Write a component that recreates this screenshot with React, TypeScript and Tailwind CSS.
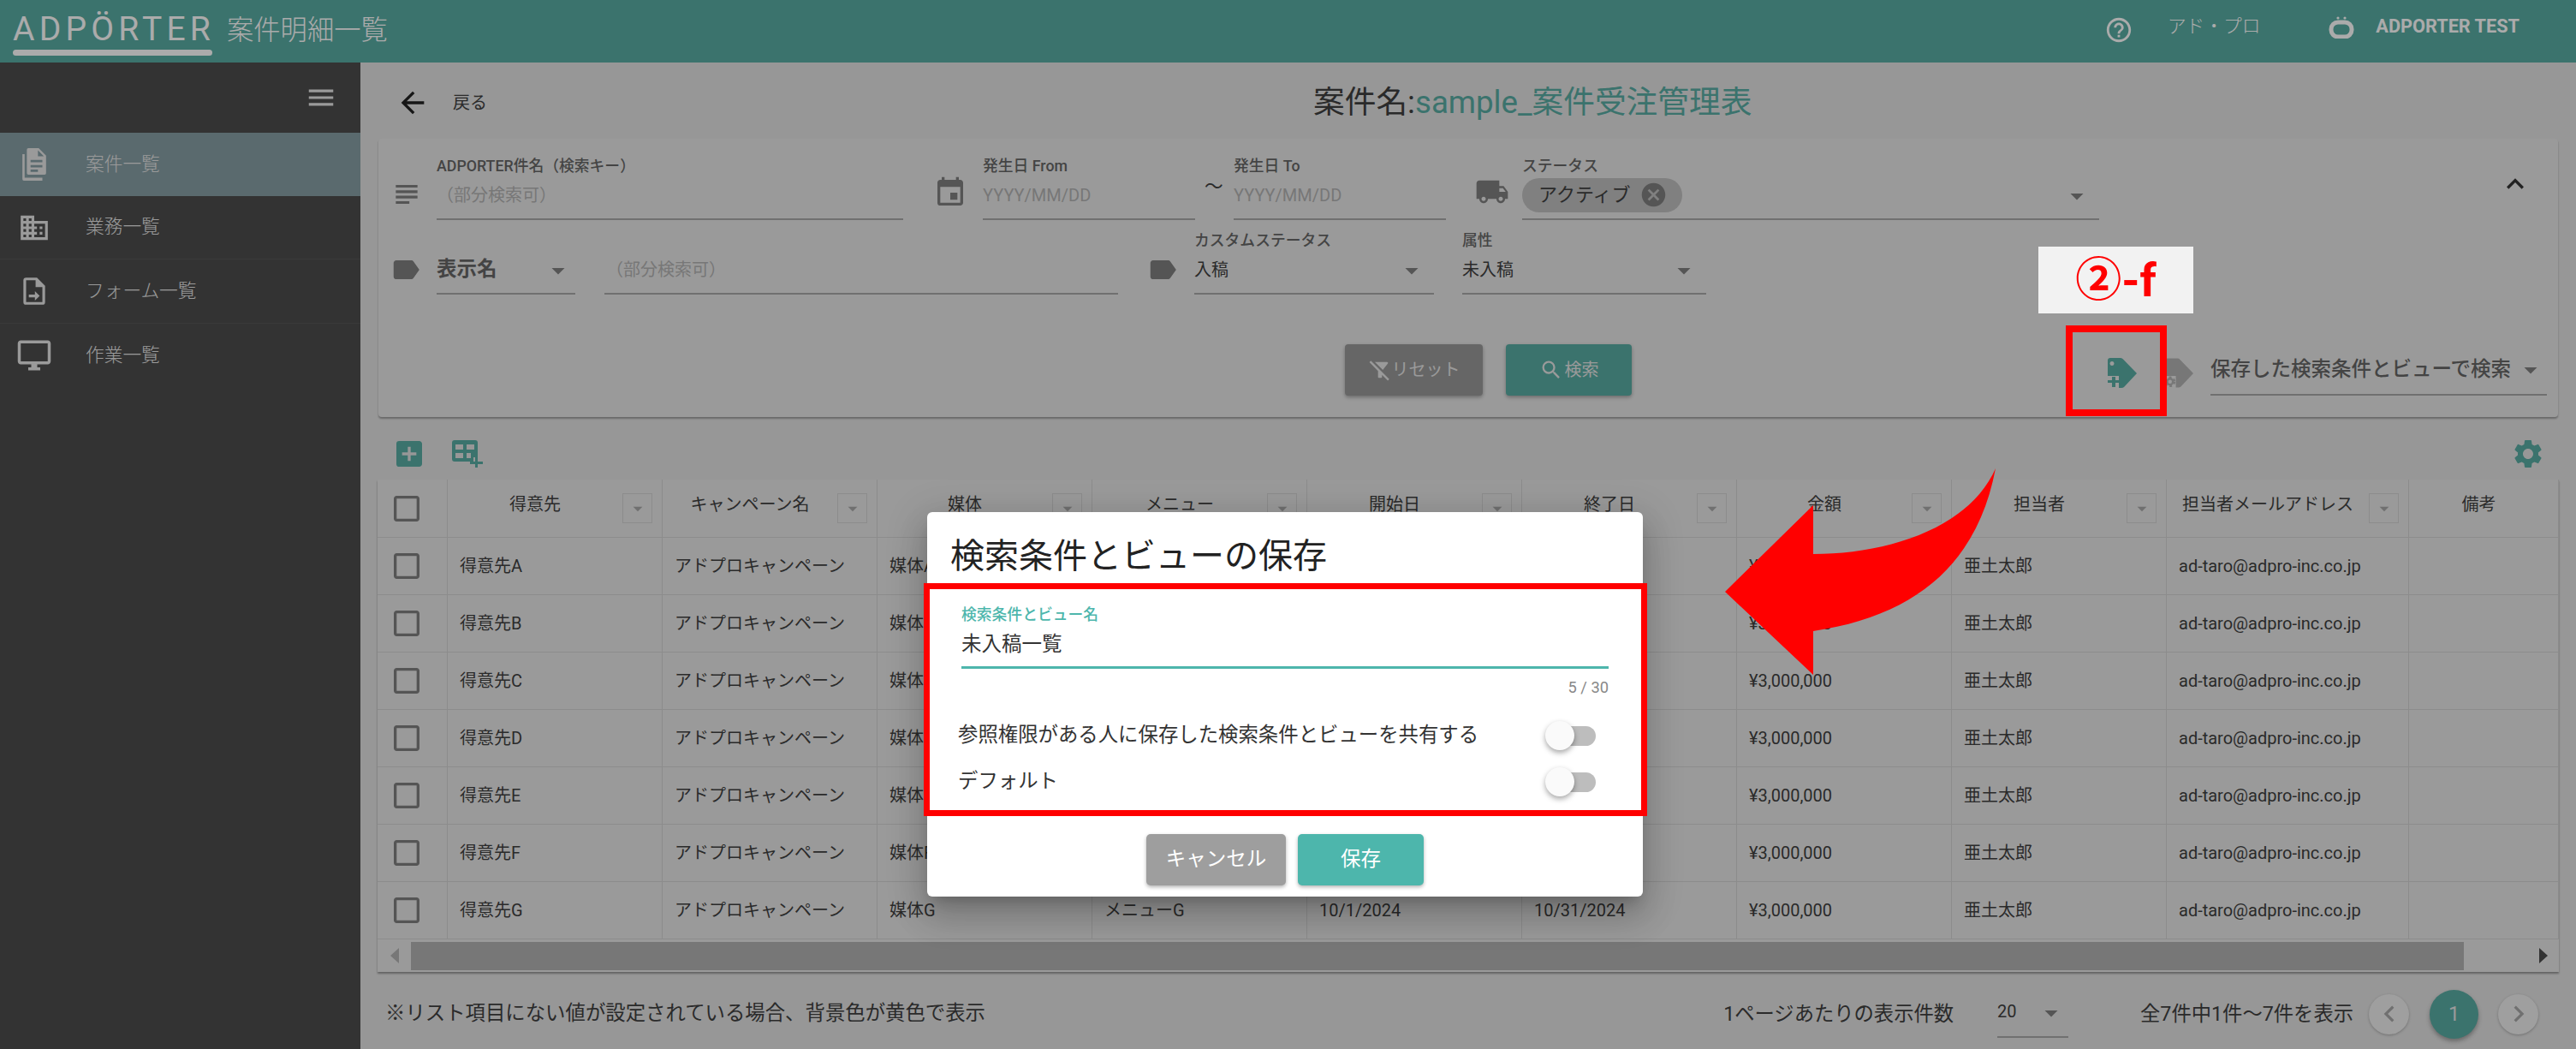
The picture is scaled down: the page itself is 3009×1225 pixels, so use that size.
import {
  MdMenu, MdBusiness, MdOutlineDesktopWindows, MdSubject, MdEvent, MdLocalShipping, MdLabel, MdCancel,
  MdKeyboardArrowUp, MdSearch, MdFilterAltOff, MdArrowBack, MdHelpOutline, MdSettings, MdAddBox,
  MdArrowDropDown, MdCheckBoxOutlineBlank, MdChevronLeft, MdChevronRight,
} from "react-icons/md";
import type { ReactNode } from "react";

const columns = ["得意先", "キャンペーン名", "媒体", "メニュー", "開始日", "終了日", "金額", "担当者", "担当者メールアドレス", "備考"];
const rowKeys = ["A", "B", "C", "D", "E", "F", "G"];
const cell = "flex items-center border-r border-b border-[#d1d1d1]";

function DocIcon() {
  return (
    <svg viewBox="0 0 32 44" className="w-[32px] h-[38px]" fill="#e6e6e6">
      <path fillRule="evenodd" d="M8 0h14l10 10v24a2 2 0 0 1-2 2H8a2 2 0 0 1-2-2V2a2 2 0 0 1 2-2zm13 3v8h8zM11 16v3h16v-3zm0 7v3h16v-3zm0 6v3h10v-3z" />
      <path d="M0 8h3v32h24v4H2a2 2 0 0 1-2-2z" />
    </svg>
  );
}

function FormIcon() {
  return (
    <svg viewBox="0 0 24 24" className="w-[38px] h-[38px]" fill="#e6e6e6">
      <path d="M14 2H6a2 2 0 0 0-2 2v16a2 2 0 0 0 2 2h12a2 2 0 0 0 2-2V8zm4 18H6V4h7v5h5z" />
      <path d="M8 14.5h4.5V12l3.5 3.5-3.5 3.5v-2.5H8z" />
    </svg>
  );
}

function TagPlus() {
  return (
    <svg viewBox="0 0 35 35" className="w-[35px] h-[35px] shrink-0 mb-[9px]" fill="#58aca3">
      <path fillRule="evenodd" d="M4 0h12q2 0 3 1.5L35 18 20 34q-1 1-3 1h-3V21H1V3q0-3 3-3zm2 4a2.5 2.5 0 1 0 .01 0z" />
      <path d="M6 22h4v4h5v3h-5v5H6v-5H1v-3h5z" />
    </svg>
  );
}

function TagGear() {
  return (
    <svg viewBox="0 0 35 35" className="w-[34px] h-[35px] shrink-0 mb-[9px]" fill="#b2b2b2">
      <path d="M4 0h12q2 0 3 1.5L35 18 20 34q-1 1-3 1h-3V21H1V3q0-3 3-3z" />
      <circle cx="7" cy="28" r="3.5" fill="none" stroke="#b2b2b2" strokeWidth="2.5" />
      <circle cx="7" cy="28" r="5.5" fill="none" stroke="#b2b2b2" strokeWidth="2" strokeDasharray="3 3" />
    </svg>
  );
}

function TablePlus() {
  return (
    <svg viewBox="0 0 36 32" className="w-[36px] h-[32px]" fill="#58aca3">
      <path fillRule="evenodd" d="M3 0h24a3 3 0 0 1 3 3v17h-5v5H3a3 3 0 0 1-3-3V3a3 3 0 0 1 3-3zm1 5v6h9V5zm13 0v6h9V5zM4 15v6h9v-6zm13 0v6h5v-6z" />
      <path d="M27 20h3v5h6v3h-6v4h-3v-4h-6v-3h6z" />
    </svg>
  );
}

function Field({ label, width, children }: { label?: string; width: string; children: ReactNode }) {
  return (
    <div className={`${width} shrink-0 h-[75px] flex flex-col`}>
      <div className="h-[24px] text-[17.8px] font-medium leading-[24px] text-[#666] whitespace-nowrap">{label}</div>
      <div className="relative flex-1 flex items-center pb-[6px] border-b-2 border-[#a7a7a7] text-[20px] whitespace-nowrap">{children}</div>
    </div>
  );
}

function Caret({ right = "right-[8px]" }: { right?: string }) {
  return <MdArrowDropDown size={36} color="#7f7f7f" className={`absolute ${right} top-[5px]`} />;
}

function Toggle() {
  return (
    <div className="relative w-[59px] h-[34px]">
      <div className="absolute left-[6px] top-[6px] w-[53px] h-[23px] rounded-full bg-[#bdbdbd]" />
      <div className="absolute left-0 top-0 w-[34px] h-[34px] rounded-full bg-[#fafafa] shadow-[0_3px_6px_rgba(0,0,0,0.35)]" />
    </div>
  );
}

export default function App() {
  return (
    <div className="relative w-[3009px] h-[1225px] overflow-hidden flex flex-col bg-[#e1e1e1] text-[#3f3f3f] font-['Roboto','Noto_Sans_CJK_JP',sans-serif]">
      {/* top bar */}
      <header className="h-[73px] shrink-0 flex items-center bg-[#58aca3] text-white">
        <div className="ml-[15px] w-[233px] flex flex-col">
          <div className="h-[38px] mt-[6px] text-[39px] leading-[38px] tracking-[5.2px] whitespace-nowrap">ADPÖRTER</div>
          <div className="h-[7px] mt-[5px] rounded-full bg-white" />
        </div>
        <div className="ml-[17px] text-[31.3px] font-light">案件明細一覧</div>
        <div className="ml-auto flex items-center pr-[66px] pb-[10px]">
          <MdHelpOutline size={34} className="mt-[6px]" />
          <span className="ml-[40px] text-[21.7px] font-light">アド・プロ</span>
          <svg viewBox="0 0 30 26" className="ml-[80px] w-[30px] h-[26px]" fill="none" stroke="#fff">
            <rect x="3" y="7" width="24" height="17" rx="8" strokeWidth="5" />
            <circle cx="11" cy="2" r="1.6" fill="#fff" stroke="none" />
            <circle cx="19" cy="2" r="1.6" fill="#fff" stroke="none" />
          </svg>
          <span className="ml-[25px] text-[21.7px] font-bold">ADPORTER TEST</span>
        </div>
      </header>

      <div className="flex-1 flex min-h-0">
        {/* side nav */}
        <aside className="w-[421px] shrink-0 bg-[#4c4c4c] text-[#e6e6e6] text-[21.7px] font-light">
          <div className="h-[82px] flex items-center justify-end pr-[27px]">
            <MdMenu size={38} />
          </div>
          <div className="h-[74px] flex items-center pl-[21px] gap-[41px] bg-[#869ea4]"><span className="w-[38px] flex justify-center"><DocIcon /></span>案件一覧</div>
          <div className="h-[74px] flex items-center pl-[21px] gap-[41px] border-b border-[#575757]"><MdBusiness size={38} />業務一覧</div>
          <div className="h-[75px] flex items-center pl-[21px] gap-[41px] border-b border-[#575757]"><FormIcon />フォーム一覧</div>
          <div className="h-[74px] flex items-center pl-[21px] gap-[41px]"><MdOutlineDesktopWindows size={42} className="-ml-[2px] -mr-[2px]" />作業一覧</div>
        </aside>

        <main className="flex-1 min-w-0 flex flex-col">
          {/* page title */}
          <div className="h-[89px] shrink-0 flex items-center pl-[41px] pt-[4px]">
            <MdArrowBack size={40} color="#222" />
            <span className="ml-[27px] text-[20px] w-[40px] shrink-0 whitespace-nowrap">戻る</span>
            <div className="ml-[965px] text-[36.7px] whitespace-nowrap">
              案件名:<span className="text-[#58aca3]">sample_案件受注管理表</span>
            </div>
          </div>

          {/* search panel */}
          <section className="ml-[21px] w-[2546px] h-[325px] shrink-0 bg-[#e6e6e6] rounded-[4px] shadow-[0_2px_2px_rgba(0,0,0,0.3)] pt-[20px] flex flex-col">
            <div className="flex items-end pl-[19px]">
              <MdSubject size={38} color="#7f7f7f" className="-ml-[5px] mb-[11px] shrink-0 mr-[16px]" />
              <Field label="ADPORTER件名（検索キー）" width="w-[545px]"><span className="text-[#b2b2b2]">（部分検索可）</span></Field>
              <MdEvent size={40} color="#7f7f7f" className="ml-[35px] mb-[12px] shrink-0 mr-[18px]" />
              <Field label="発生日 From" width="w-[248px]"><span className="text-[#b2b2b2]">YYYY/MM/DD</span></Field>
              <div className="w-[45px] h-[75px] shrink-0 pl-[11px] pt-[20px] text-[21.7px]">〜</div>
              <Field label="発生日 To" width="w-[248px]"><span className="text-[#b2b2b2]">YYYY/MM/DD</span></Field>
              <MdLocalShipping size={40} color="#7f7f7f" className="ml-[34px] mb-[13px] shrink-0 mr-[15px]" />
              <Field label="ステータス" width="w-[674px]">
                <div className="h-[40px] w-[187px] rounded-full bg-[#bfbfbf] flex items-center pl-[19px] text-[22px]">
                  アクティブ
                  <MdCancel size={33} color="#7f7f7f" className="ml-[10px]" />
                </div>
                <Caret />
              </Field>
              <MdKeyboardArrowUp size={40} color="#333" className="ml-[466px] mb-[22px] shrink-0" />
            </div>
            <div className="flex items-end pl-[18px] mt-[12px]">
              <MdLabel size={38} color="#7f7f7f" className="mb-[10px] shrink-0 mr-[17px] -ml-[5px]" />
              <Field width="w-[162px]">
                <span className="text-[23.5px] font-bold text-[#666]">表示名</span>
                <Caret right="right-[2px]" />
              </Field>
              <div className="ml-[34px]">
                <Field width="w-[600px]"><span className="ml-[2px] text-[#b2b2b2]">（部分検索可）</span></Field>
              </div>
              <MdLabel size={38} color="#7f7f7f" className="ml-[33px] mb-[10px] shrink-0 mr-[18px]" />
              <Field label="カスタムステータス" width="w-[280px]">
                入稿
                <Caret />
              </Field>
              <div className="ml-[33px]">
                <Field label="属性" width="w-[285px]">
                  未入稿
                  <Caret />
                </Field>
              </div>
            </div>
            <div className="flex items-end pl-[1129px] mt-[58px]">
              <button className="w-[161px] h-[60px] shrink-0 rounded-[4px] bg-[#989898] text-[#e6e6e6] text-[20px] flex items-center justify-center shadow-[0_2px_4px_rgba(0,0,0,0.3)]">
                <MdFilterAltOff size={28} />リセット
              </button>
              <button className="ml-[27px] w-[147px] h-[60px] shrink-0 rounded-[4px] bg-[#58aca3] text-[#e6e6e6] text-[20px] flex items-center justify-center gap-[2px] shadow-[0_2px_4px_rgba(0,0,0,0.3)]">
                <MdSearch size={28} />検索
              </button>
              <div className="ml-[555px] mr-[32px] shrink-0"><TagPlus /></div>
              <TagGear />
              <div className="relative ml-[20px] w-[393px] h-[57px] shrink-0 border-b-2 border-[#a7a7a7] flex items-center pb-[2px] text-[23.5px] font-medium text-[#666] whitespace-nowrap">
                保存した検索条件とビューで検索
                <MdArrowDropDown size={36} color="#7f7f7f" className="absolute right-[1px] top-[9px]" />
              </div>
            </div>
          </section>

          {/* table tools */}
          <div className="h-[73px] shrink-0 flex items-center pl-[37px] pr-[36px] pt-[13px]">
            <MdAddBox size={40} color="#58aca3" />
            <span className="ml-[30px]"><TablePlus /></span>
            <MdSettings size={40} color="#58aca3" className="ml-auto" />
          </div>

          {/* table */}
          <div className="ml-[20px] w-[2548px] shrink-0 bg-[#e6e6e6] shadow-[0_2px_2px_rgba(0,0,0,0.35)] text-[20px]">
            <div className="grid grid-cols-[82px_repeat(8,251px)_283px_175px]">
              <div className={`${cell} h-[68px] pl-[14px]`}><MdCheckBoxOutlineBlank size={40} color="#7f7f7f" /></div>
              {columns.map((c, i) => (
                <div key={c} className={`${cell} h-[68px] pr-[11px]`}>
                  <span className="flex-1 text-center pb-[10px] whitespace-nowrap">{c}</span>
                  {i < 9 && (
                    <span className="w-[35px] h-[35px] shrink-0 border border-[#d1d1d1] flex items-center justify-center">
                      <MdArrowDropDown size={26} color="#a7a7a7" />
                    </span>
                  )}
                </div>
              ))}
              {rowKeys.map((k) => (
                <div key={k} className="contents">
                  <div className={`${cell} h-[67px] pl-[14px]`}><MdCheckBoxOutlineBlank size={40} color="#7f7f7f" /></div>
                  <div className={`${cell} pl-[14px]`}>得意先{k}</div>
                  <div className={`${cell} pl-[14px]`}>アドプロキャンペーン</div>
                  <div className={`${cell} pl-[14px]`}>媒体{k}</div>
                  <div className={`${cell} pl-[14px]`}>メニュー{k}</div>
                  <div className={`${cell} pl-[14px]`}>10/1/2024</div>
                  <div className={`${cell} pl-[14px]`}>10/31/2024</div>
                  <div className={`${cell} pl-[14px]`}>¥3,000,000</div>
                  <div className={`${cell} pl-[14px]`}>亜土太郎</div>
                  <div className={`${cell} pl-[14px]`}>ad-taro@adpro-inc.co.jp</div>
                  <div className={cell} />
                </div>
              ))}
            </div>
            {/* scrollbar */}
            <div className="h-[38px] flex items-center">
              <svg viewBox="0 0 10 18" className="ml-[15px] w-[10px] h-[18px]" fill="#b2b2b2"><path d="M10 0v18L0 9z" /></svg>
              <div className="ml-[14px] w-[2398px] h-[33px] bg-[#b2b2b2]" />
              <svg viewBox="0 0 10 18" className="ml-[88px] w-[10px] h-[18px]" fill="#4c4c4c"><path d="M0 0v18L10 9z" /></svg>
            </div>
          </div>

          {/* footer */}
          <div className="flex-1 flex items-center pl-[29px] pr-[44px] pt-[8px] text-[23.3px] whitespace-nowrap">
            <span className="text-[23.4px]">※リスト項目にない値が設定されている場合、背景色が黄色で表示</span>
            <span className="ml-auto">1ページあたりの表示件数</span>
            <div className="relative ml-[51px] w-[83px] h-[56px] border-b-2 border-[#a7a7a7] text-[20px] flex items-center pb-[5px]">
              20
              <MdArrowDropDown size={36} color="#7f7f7f" className="absolute right-[2px] top-[9px]" />
            </div>
            <span className="ml-[84px]">全7件中1件〜7件を表示</span>
            <button className="ml-[18px] w-[47px] h-[47px] rounded-full bg-[#ededed] text-[#a7a7a7] flex items-center justify-center shadow-[0_1px_3px_rgba(0,0,0,0.25)]"><MdChevronLeft size={38} /></button>
            <button className="ml-[24px] w-[57px] h-[57px] rounded-full bg-[#58aca3] text-[#e6e6e6] flex items-center justify-center shadow-[0_3px_5px_rgba(0,0,0,0.3)]">1</button>
            <button className="ml-[23px] w-[47px] h-[47px] rounded-full bg-[#ededed] text-[#a7a7a7] flex items-center justify-center shadow-[0_1px_3px_rgba(0,0,0,0.25)]"><MdChevronRight size={38} /></button>
          </div>
        </main>
      </div>

      {/* backdrop */}
      <div className="absolute inset-0 bg-black/33" />

      {/* dialog */}
      <div className="absolute left-[1083px] top-[598px] w-[836px] rounded-[6px] bg-white text-[#333] shadow-[0_11px_15px_-7px_rgba(0,0,0,0.2),0_24px_38px_3px_rgba(0,0,0,0.14),0_9px_46px_8px_rgba(0,0,0,0.12)]">
        <div className="h-[83px] pl-[27px] pt-[28px] text-[40px] leading-[48px] text-[#222]">検索条件とビューの保存</div>
        <div className="px-[40px] pt-[27px]">
          <div className="h-[20px] text-[17.8px] leading-[20px] font-medium text-[#4db6ac]">検索条件とビュー名</div>
          <div className="mt-[5px] h-[48px] pb-[8px] border-b-[3px] border-[#4db6ac] text-[23.5px] leading-[38px]">未入稿一覧</div>
          <div className="mt-[12px] h-[20px] text-right text-[18.3px] leading-[20px] text-[#888]">5 / 30</div>
          <div className="mt-[19px] -ml-[4px] pr-[15px] h-[54px] flex items-center justify-between text-[23.4px]">
            参照権限がある人に保存した検索条件とビューを共有する
            <Toggle />
          </div>
          <div className="-ml-[4px] pr-[15px] h-[54px] flex items-center justify-between text-[23.4px]">
            デフォルト
            <Toggle />
          </div>
        </div>
        <div className="mt-[34px] pb-[13px] flex justify-center gap-[14px] text-[23.5px] text-white">
          <button className="w-[163px] h-[60px] rounded-[5px] bg-[#9e9e9e] shadow-[0_2px_4px_rgba(0,0,0,0.3)]">キャンセル</button>
          <button className="w-[147px] h-[60px] rounded-[5px] bg-[#4db6ac] shadow-[0_2px_4px_rgba(0,0,0,0.3)]">保存</button>
        </div>
      </div>

      {/* callouts drawn on top of the screenshot */}
      <div className="absolute left-[1079px] top-[681px] w-[845px] h-[272px] border-[7px] border-[#ff0000]" />
      <div className="absolute left-[2413px] top-[380px] w-[118px] h-[106px] border-[8px] border-[#ff0000]" />
      <div className="absolute left-[2381px] top-[288px] w-[181px] h-[78px] bg-[#f2f2f2] flex items-center justify-center text-[54px] font-bold text-[#ff0000]">②-f</div>
      <svg viewBox="0 0 316 241" className="absolute left-[2015px] top-[547px] w-[316px] h-[241px]" fill="#ff0000">
        <path d="M0 144 103 43V100C190 100 285 70 316 0 295 110 225 172 103 190V241Z" />
      </svg>
    </div>
  );
}
